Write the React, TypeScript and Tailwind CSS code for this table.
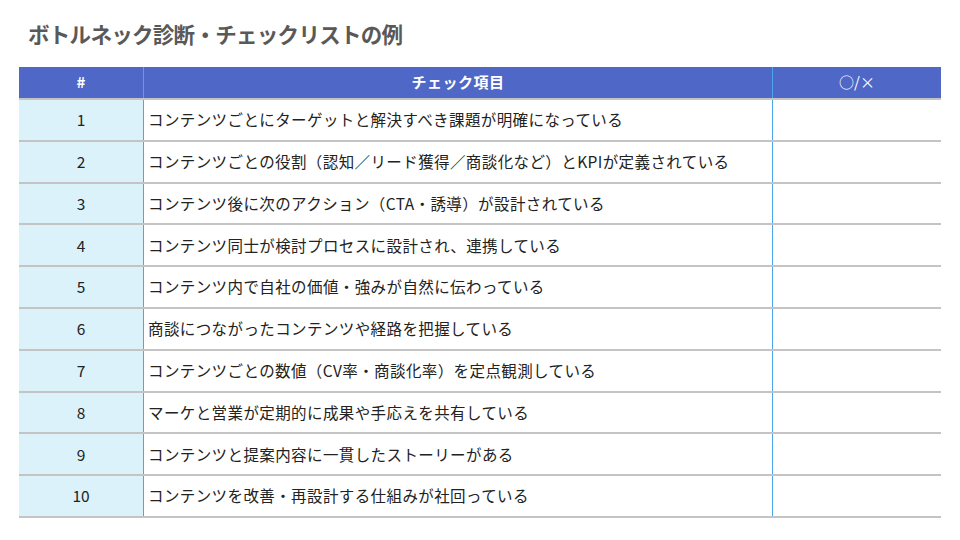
const items = [
  "コンテンツごとにターゲットと解決すべき課題が明確になっている",
  "コンテンツごとの役割（認知／リード獲得／商談化など）とKPIが定義されている",
  "コンテンツ後に次のアクション（CTA・誘導）が設計されている",
  "コンテンツ同士が検討プロセスに設計され、連携している",
  "コンテンツ内で自社の価値・強みが自然に伝わっている",
  "商談につながったコンテンツや経路を把握している",
  "コンテンツごとの数値（CV率・商談化率）を定点観測している",
  "マーケと営業が定期的に成果や手応えを共有している",
  "コンテンツと提案内容に一貫したストーリーがある",
  "コンテンツを改善・再設計する仕組みが社回っている",
];

export default function App() {
  return (
    <main
      className="h-[540px] w-[960px] overflow-hidden bg-white"
      style={{ fontFamily: '"Noto Sans CJK JP", "Noto Sans", sans-serif' }}
    >
      {/* タイトル */}
      <h1 className="pl-[28px] pt-[19px] text-[21.5px] font-bold leading-[30px] tracking-[-0.7px] text-[#595959]">
        ボトルネック診断・チェックリストの例
      </h1>

      {/* テーブル */}
      <div className="mx-[19px] mt-[18px] w-[922px]">
        <div className="flex h-[31px] bg-[#4f67c6] text-[15px] font-bold text-white">
          <div className="flex w-[124px] items-center justify-center">#</div>
          <div className="flex w-[629px] items-center justify-center border-l border-[#4aa8ea] tracking-[0.5px]">
            チェック項目
          </div>
          <div className="flex flex-1 items-center justify-center border-l border-[#4aa8ea] font-normal">
            ○/×
          </div>
        </div>

        {items.map((text, i) => (
          <div
            key={i}
            className="flex h-[41.8px] border-t-2 border-[#c4c4c4] text-[15.5px] text-[#222]"
          >
            <div className="flex w-[124px] items-center justify-center bg-[#dcf2fa]">
              {i + 1}
            </div>
            <div className="flex w-[629px] items-center border-l border-[#4aa8ea] pl-[4px] tracking-[0.4px]">
              {text}
            </div>
            <div className="flex-1 border-l border-[#4aa8ea]" />
          </div>
        ))}
        <div className="h-[2px] bg-[#c4c4c4]" />
      </div>
    </main>
  );
}
